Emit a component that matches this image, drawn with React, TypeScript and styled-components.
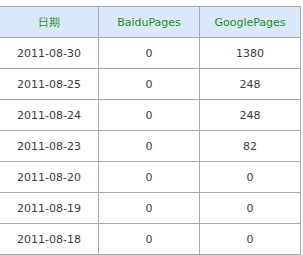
import styled, { createGlobalStyle } from 'styled-components';

const GlobalStyle = createGlobalStyle`
    body {
        margin: 0;
        background: #ffffff;
        font-family: "DejaVu Sans", Verdana, sans-serif;
    }
`;

const rows = [
    { date: '2011-08-30', baidu: 0, google: 1380 },
    { date: '2011-08-25', baidu: 0, google: 248 },
    { date: '2011-08-24', baidu: 0, google: 248 },
    { date: '2011-08-23', baidu: 0, google: 82 },
    { date: '2011-08-20', baidu: 0, google: 0 },
    { date: '2011-08-19', baidu: 0, google: 0 },
    { date: '2011-08-18', baidu: 0, google: 0 },
];

const Wrap = styled.div`
    padding-top: 6px;
    margin-left: -1px;
`;

const Table = styled.table`
    border-collapse: collapse;
    table-layout: fixed;
    width: 301px;
    font-size: 11px;
`;

const Head = styled.th`
    height: 30px;
    padding: 0;
    background: #dae8f9;
    color: #1a911a;
    font-weight: normal;
    border: 1px solid #a9a9a9;
    text-align: center;
`;

const Cell = styled.td`
    height: 30px;
    padding: 0;
    color: #3c3c3c;
    border: 1px solid #a9a9a9;
    text-align: center;
`;

export default function App() {
    return (
        <Wrap>
            <GlobalStyle />
            <Table>
                <colgroup>
                    <col style={{ width: 99 }} />
                    <col style={{ width: 101 }} />
                    <col style={{ width: 101 }} />
                </colgroup>
                <thead>
                    <tr>
                        <Head>日期</Head>
                        <Head>BaiduPages</Head>
                        <Head>GooglePages</Head>
                    </tr>
                </thead>
                <tbody>
                    {rows.map(row => (
                        <tr key={row.date}>
                            <Cell>{row.date}</Cell>
                            <Cell>{row.baidu}</Cell>
                            <Cell>{row.google}</Cell>
                        </tr>
                    ))}
                </tbody>
            </Table>
        </Wrap>
    );
}
